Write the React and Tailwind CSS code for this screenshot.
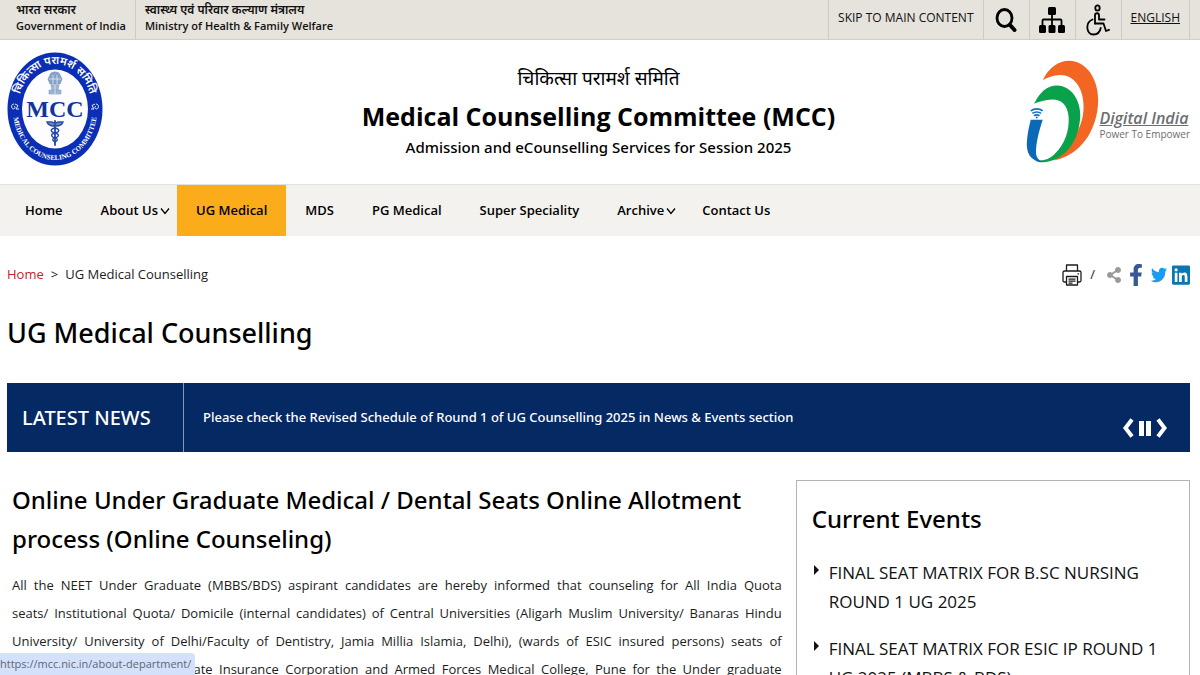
import { FaFacebookF, FaLinkedin, FaShareAlt, FaTwitter } from "react-icons/fa";

const navItems = [
  { label: "Home" },
  { label: "About Us", menu: true },
  { label: "UG Medical", active: true },
  { label: "MDS" },
  { label: "PG Medical" },
  { label: "Super Speciality" },
  { label: "Archive", menu: true },
  { label: "Contact Us" },
];

const events = ["FINAL SEAT MATRIX FOR B.SC NURSING ROUND 1 UG 2025", "FINAL SEAT MATRIX FOR ESIC IP ROUND 1 UG 2025 (MBBS & BDS)"];

function SearchIcon() {
  return (
    <svg viewBox="0 0 22 24" className="h-6 w-[22px]" fill="none" stroke="currentColor" aria-hidden="true">
      <ellipse cx="9.5" cy="10" rx="7.5" ry="8.5" strokeWidth="2.8" />
      <path d="M15 17l4.5 5" strokeWidth="4" strokeLinecap="round" />
    </svg>
  );
}

function SitemapIcon() {
  return (
    <svg viewBox="0 0 26 26" className="h-[26px] w-[26px]" fill="currentColor" aria-hidden="true">
      <rect x="9" y="0" width="8" height="8" rx="1.5" />
      <rect x="0" y="18" width="7" height="8" rx="1.5" />
      <rect x="9.5" y="18" width="7" height="8" rx="1.5" />
      <rect x="19" y="18" width="7" height="8" rx="1.5" />
      <path d="M13 7v11M3.5 18v-4.500c0-.6.400-1 1-1h17c.6 0 1 .4 1 1V18" fill="none" stroke="currentColor" strokeWidth="1.8" />
    </svg>
  );
}

function AccessIcon() {
  return (
    <svg viewBox="0 0 24 32" className="h-8 w-6" fill="none" stroke="currentColor" strokeWidth="1.8" strokeLinecap="round" strokeLinejoin="round" aria-hidden="true">
      <ellipse cx="11.5" cy="4" rx="2.2" ry="2.6" />
      <path d="M9 19.500v-8c0-3 4-3 4 0v4h5.500" />
      <path d="M9 19.500h8.500l2.500 7.500 3-1.200" />
      <path d="M6.500 15.500c-7.500 3-6.500 15 1 15 4 0 6.500-2.700 7.200-6.500" />
    </svg>
  );
}

function PrintIcon() {
  return (
    <svg viewBox="0 0 20 22" className="h-[22px] w-5" fill="none" stroke="currentColor" strokeWidth="1.3" strokeLinejoin="round" aria-hidden="true">
      <path d="M4.500 7V1h11v6" />
      <path d="M4.500 18H2.500C1.500 18 1 17.500 1 16.500v-8C1 7.500 1.500 7 2.500 7h15c1 0 1.500.5 1.500 1.500v8c0 1-.5 1.500-1.500 1.500h-2" />
      <path d="M4.500 12.500h11V21h-11z" />
      <path d="M6.500 15.200h7M6.500 17.200h7M6.500 19.200h4M15.500 9.800h1.500" />
    </svg>
  );
}

function MccLogo() {
  return (
    <svg viewBox="0 0 96 114" className="h-[114px] w-24" role="img" aria-label="MCC">
      <defs>
        <path id="arcTop" d="M11 57A37 45 0 0 1 85 57" />
        <path id="arcBottom" d="M6 57A42 51 0 0 0 90 57" />
      </defs>
      <ellipse cx="48" cy="57" rx="47.500" ry="56.500" fill="#0b2fb4" />
      <ellipse cx="48" cy="57" rx="33" ry="39.500" fill="#fdfdff" />
      <text fill="#fff" fontSize="11" fontWeight="600" fontFamily='"Noto Sans", "Noto Sans Devanagari", sans-serif' textAnchor="middle">
        <textPath href="#arcTop" startOffset="50%">चिकित्सा परामर्श समिति</textPath>
      </text>
      <text fill="#fff" fontSize="7" fontWeight="700" fontFamily='"Liberation Serif", serif' textAnchor="middle">
        <textPath href="#arcBottom" startOffset="50%">MEDICAL COUNSELING COMMITTEE</textPath>
      </text>
      <g stroke="#e4eaff" strokeWidth="1" fill="none">
        <path d="M7 52c-3 0-3 4-1 5 2 0 3-2 1-3M8 52l3 1.500-2 3.500h3" />
        <path d="M89 52c3 0 3 4 1 5-2 0-3-2-1-3M88 52l-3 1.500 2 3.500h-3" />
      </g>
      <g fill="#5f86b8" stroke="#38659f" strokeWidth=".6">
        <path d="M43 23c0-4 10-4 10 0l2 4-2 5H43l-2-5z" opacity=".75" />
        <path d="M44 33h8l-1 5h-6zM42 38h12v4H42z" opacity=".6" />
        <path d="M46 23v9M50 23v9M42 27h12M48 33v9" stroke="#fff" />
      </g>
      <text x="48" y="65" fill="#12349c" fontSize="24" fontWeight="700" fontFamily='"Liberation Serif", serif' textAnchor="middle">MCC</text>
      <g fill="none" stroke="#24469f" strokeWidth="1.300" strokeLinecap="round">
        <path d="M48 69v24" strokeWidth="1.800" />
        <path d="M47 71c-2-2-5-1-7-1 1 3 3 4 7 4M49 71c2-2 5-1 7-1-1 3-3 4-7 4" fill="#6d86c4" />
        <path d="M48 76c-5 1-5 4 0 5s4 4 0 5-2 3 0 4M48 76c5 1 5 4 0 5s-4 4 0 5 2 3 0 4" />
      </g>
    </svg>
  );
}

function DigitalIndiaMark() {
  return (
    <svg viewBox="627 178 219 310" className="h-[103px] w-[73px]" aria-hidden="true">
      <path fill="#f26522" d="M677 239C695 200 725 180 757 180C810 182 844 235 844 300C842 390 790 465 712 480C765 430 800 380 800 318C800 255 765 222 730 223C710 224 690 230 677 239Z" />
      <path fill="#0aa14b" d="M651 310C668 275 690 255 720 255C765 257 790 300 790 345C788 420 745 480 680 486C665 486 655 482 655 478C670 484 695 480 712 462C745 430 757 390 755 350C752 310 730 296 705 297C685 298 665 303 651 310Z" />
      <path fill="#0a6ab8" d="M641 358H677C668 385 655 430 657 460C659 475 668 482 680 483L668 485C640 478 629 460 629 430C630 405 635 380 641 358Z" />
      <g fill="none" stroke="#1273c0" strokeWidth="5">
        <path d="M641 331c10-8 26-8 36 0M646 339c7-6 19-6 26 0M651 346c4-4 12-4 16 0" />
      </g>
      <circle cx="659" cy="351" r="3" fill="#1273c0" />
    </svg>
  );
}

function TopBar() {
  return (
    <div className="flex h-10 justify-between border-b border-[#d3cfc8] bg-[#e6e2dc] text-[#111]">
      <div className="flex text-[11px] leading-4 font-semibold">
        <a href="#india" className="border-r border-[#cfcbc4] pt-[2px] pr-[9px] pl-4">
          <span className="block text-[12px] leading-4">भारत सरकार</span>
          <span className="block">Government of India</span>
        </a>
        <a href="#ministry" className="pt-[2px] pl-[9px]">
          <span className="block text-[12px] leading-4">स्वास्थ्य एवं परिवार कल्याण मंत्रालय</span>
          <span className="block">Ministry of Health &amp; Family Welfare</span>
        </a>
      </div>
      <div className="mr-[10px] flex divide-x divide-[#cfcbc4] border-x border-[#cfcbc4] text-[12px] leading-4 font-medium">
        <a href="#content" className="px-[9px] pt-[10px]">SKIP TO MAIN CONTENT</a>
        <button type="button" aria-label="Search" className="flex w-[46px] items-center justify-center text-black">
          <SearchIcon />
        </button>
        <button type="button" aria-label="Sitemap" className="flex w-[46px] items-center justify-center text-black">
          <SitemapIcon />
        </button>
        <button type="button" aria-label="Accessibility" className="flex w-[46px] items-center justify-center text-black">
          <AccessIcon />
        </button>
        <a href="#english" className="px-[9px] pt-[10px] underline">ENGLISH</a>
      </div>
    </div>
  );
}

function Header() {
  return (
    <header className="grid h-36 grid-cols-[200px_1fr_200px] pt-3 pr-[10px] pl-[7px]">
      <a href="#home">
        <MccLogo />
      </a>
      <div className="pt-[10px] text-center text-black">
        <p className="text-[19px] leading-8">चिकित्सा परामर्श समिति</p>
        <p className="text-[25px] leading-[44px] font-bold">Medical Counselling Committee (MCC)</p>
        <p className="font-['Noto_Sans',sans-serif] text-[15px] leading-[18px] font-medium">Admission and eCounselling Services for Session 2025</p>
      </div>
      <a href="#digital" className="flex justify-end pt-2">
        <DigitalIndiaMark />
        <span className="pt-12 whitespace-nowrap text-[#6d6e71]">
          <span className="block text-[16px] leading-5 font-semibold italic underline">Digital India</span>
          <span className="block text-[10px] leading-3">Power To Empower</span>
        </span>
      </a>
    </header>
  );
}

function Nav() {
  return (
    <nav className="flex h-[52px] border-t border-[#e4e2df] bg-[#f4f2ee] pl-[6px] text-[13px] font-semibold text-black">
      {navItems.map((item) => (
        <a
          key={item.label}
          href="#nav"
          className={`flex items-center pl-[19px] ${item.active ? "bg-[#fbac1b]" : ""} ${item.menu ? "pr-[7px]" : "pr-[19px]"}`}
        >
          {item.label}
          {item.menu && (
            <svg viewBox="0 0 10 8" className="ml-[2px] h-2 w-[10px]" fill="none" stroke="currentColor" strokeWidth="1.300" aria-hidden="true">
              <path d="M1 1.500l4 5 4-5" />
            </svg>
          )}
        </a>
      ))}
    </nav>
  );
}

function LatestNews() {
  return (
    <section className="mt-8 flex h-[69px] items-center bg-[#052962] font-['Noto_Sans',sans-serif] font-medium text-white">
      <h2 className="flex w-[177px] items-center self-stretch border-r border-[#8795b3] pl-[15px] text-[20px]">LATEST NEWS</h2>
      <a href="#news" className="pl-[19px] text-[13px]">
        Please check the Revised Schedule of Round 1 of UG Counselling 2025 in News &amp; Events section
      </a>
      <div className="mt-5 mr-[22px] ml-auto flex gap-[5px]">
        <button type="button" aria-label="Previous">
          <svg viewBox="0 0 12 20" className="h-5 w-3" fill="none" stroke="currentColor" strokeWidth="4"><path d="M10 1.500L3.500 10l6.500 8.500" /></svg>
        </button>
        <button type="button" aria-label="Pause">
          <svg viewBox="0 0 12 20" className="h-5 w-3" fill="currentColor"><path d="M0 3h5v15H0zM7 3h5v15H7z" /></svg>
        </button>
        <button type="button" aria-label="Next">
          <svg viewBox="0 0 12 20" className="h-5 w-3" fill="none" stroke="currentColor" strokeWidth="4"><path d="M2 1.500L8.500 10 2 18.500" /></svg>
        </button>
      </div>
    </section>
  );
}

export default function App() {
  return (
    <div className="min-h-screen bg-white font-['Open_Sans','Noto_Sans','Noto_Sans_Devanagari',sans-serif]">
      <TopBar />
      <Header />
      <Nav />

      <main id="content" className="pr-[10px] pl-[7px]">
        <div className="flex h-[78px] items-center justify-between text-[13px] text-[#1c1c1c]">
          <p>
            <a href="#home" className="text-[#c8202f]">Home</a>
            <span className="mx-[7px]">&gt;</span>
            UG Medical Counselling
          </p>
          <div className="flex items-center">
            <button type="button" aria-label="Print"><PrintIcon /></button>
            <span className="mx-2">/</span>
            <a href="#share" aria-label="Share" className="ml-1 text-[#9a9a9a]"><FaShareAlt className="h-4 w-[14px]" /></a>
            <a href="#facebook" aria-label="Facebook" className="ml-2 text-[#3a5795]"><FaFacebookF className="h-[22px] w-[14px]" /></a>
            <a href="#twitter" aria-label="Twitter" className="ml-2 text-[#1d9bf0]"><FaTwitter className="h-[18px] w-4" preserveAspectRatio="none" /></a>
            <a href="#linkedin" aria-label="LinkedIn" className="ml-[5px] text-[#0a77b0]"><FaLinkedin className="h-[22px] w-[18px]" preserveAspectRatio="none" /></a>
          </div>
        </div>

        <h1 className="font-['Noto_Sans',sans-serif] text-[27px] leading-[37px] font-medium text-black">UG Medical Counselling</h1>

        <LatestNews />

        <div className="mt-7 flex items-start gap-[14px]">
          <article className="flex-1 pl-[5px]">
            <h2 className="font-['Noto_Sans',sans-serif] text-[24px] leading-[39px] font-medium text-black">
              Online Under Graduate Medical / Dental Seats Online Allotment process (Online Counseling)
            </h2>
            <p className="mt-[13px] text-justify text-[13px] leading-7 text-[#1c1c1c] [text-align-last:justify]">
              All the NEET Under Graduate (MBBS/BDS) aspirant candidates are hereby informed that counseling for All India Quota
              <br />
              seats/ Institutional Quota/ Domicile (internal candidates) of Central Universities (Aligarh Muslim University/ Banaras Hindu
              <br />
              University/ University of Delhi/Faculty of Dentistry, Jamia Millia Islamia, Delhi), (wards of ESIC insured persons) seats of
              <br />
              colleges under Employees State Insurance Corporation and Armed Forces Medical College, Pune for the Under graduate
            </p>
          </article>

          <aside className="w-1/3 border border-[#b3b3b3] px-[15px] pt-5">
            <h2 className="font-['Noto_Sans',sans-serif] text-[24px] leading-9 font-medium text-black">Current Events</h2>
            <ul className="mt-[21px] text-[17px] leading-[29px] text-[#111]">
              {events.map((event) => (
                <li key={event} className="mb-[18px] flex gap-[9px]">
                  <svg viewBox="0 0 8 12" className="mt-[6px] h-3 w-2 shrink-0" fill="currentColor" aria-hidden="true"><path d="M2 1l5 5-5 5z" /></svg>
                  <a href="#event">{event}</a>
                </li>
              ))}
            </ul>
          </aside>
        </div>
      </main>

      <div className="fixed bottom-0 left-0 h-[22px] overflow-hidden rounded-tr bg-[#d3e1fb] pr-1 text-[11px] leading-[22px] text-[#5f6671]">
        https://mcc.nic.in/about-department/
      </div>
    </div>
  );
}
